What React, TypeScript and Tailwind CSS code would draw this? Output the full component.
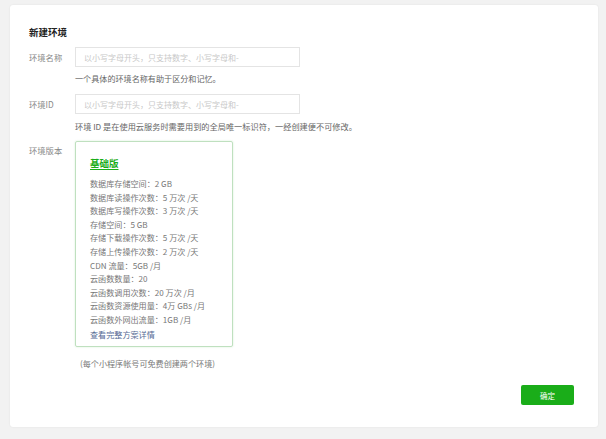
import React from "react";

const features = [
  "数据库存储空间：2 GB",
  "数据库读操作次数：5 万次 /天",
  "数据库写操作次数：3 万次 /天",
  "存储空间：5 GB",
  "存储下载操作次数：5 万次 /天",
  "存储上传操作次数：2 万次 /天",
  "CDN 流量：5GB /月",
  "云函数数量：20",
  "云函数调用次数：20 万次 /月",
  "云函数资源使用量：4万 GBs /月",
  "云函数外网出流量：1GB /月",
];

const font = { fontFamily: '"Noto Sans CJK SC", "Noto Sans", sans-serif' };

export default function App() {
  return (
    <div className="w-[606px] h-[439px] bg-[#f2f2f2] pt-[5px] pl-[10px]" style={font}>
      <div className="w-[588px] h-[422px] bg-white rounded-[3px] shadow-[0_0_2px_rgba(0,0,0,0.08)] flex flex-col pl-[19px] pr-[24px] pt-[20px]">
        <h1 className="text-[9.5px] leading-[14px] font-bold text-[#222]">新建环境</h1>

        <div className="flex items-center mt-[8px]">
          <label className="w-[46px] text-[8.3px] text-[#888]">环境名称</label>
          <input
            className="w-[225px] h-[20px] border border-[#e4e4e4] px-[8px] text-[8px] placeholder-[#c8c8c8] outline-none"
            placeholder="以小写字母开头，只支持数字、小写字母和-"
          />
        </div>
        <p className="ml-[46px] mt-[6px] text-[8.1px] leading-[12px] text-[#666]">一个具体的环境名称有助于区分和记忆。</p>

        <div className="flex items-center mt-[9px]">
          <label className="w-[46px] text-[8.3px] text-[#888]">环境ID</label>
          <input
            className="w-[225px] h-[20px] border border-[#e4e4e4] px-[8px] text-[8px] placeholder-[#c8c8c8] outline-none"
            placeholder="以小写字母开头，只支持数字、小写字母和-"
          />
        </div>
        <p className="ml-[46px] mt-[6px] text-[8.2px] leading-[12px] text-[#666]">
          环境 ID 是在使用云服务时需要用到的全局唯一标识符，一经创建便不可修改。
        </p>

        <div className="flex items-start mt-[9px]">
          <label className="w-[46px] text-[8.3px] leading-[12px] text-[#888] mt-[3px]">环境版本</label>
          <div className="w-[158px] border border-[#bfe0bf] rounded-[2px] pl-[14px] pt-[14px] pb-[5px] shadow-[0_0_2px_rgba(26,173,25,0.2)]">
            <div className="text-[9.5px] leading-[14px] font-bold text-[#1aad19] underline underline-offset-2">基础版</div>
            <ul className="mt-[7px]">
              {features.map((f) => (
                <li key={f} className="text-[8.1px] leading-[13.6px] text-[#777] whitespace-nowrap">
                  {f}
                </li>
              ))}
            </ul>
            <a className="block mt-[1px] text-[8.1px] leading-[13.6px] text-[#576b95]">查看完整方案详情</a>
          </div>
        </div>

        <p className="ml-[51px] mt-[11px] text-[8.1px] leading-[12px] text-[#777]">(每个小程序帐号可免费创建两个环境)</p>

        <div className="flex justify-end mt-[15px]">
          <button className="w-[53px] h-[20px] bg-[#1aad19] rounded-[2px] text-white text-[7.5px]">确定</button>
        </div>
      </div>
    </div>
  );
}
